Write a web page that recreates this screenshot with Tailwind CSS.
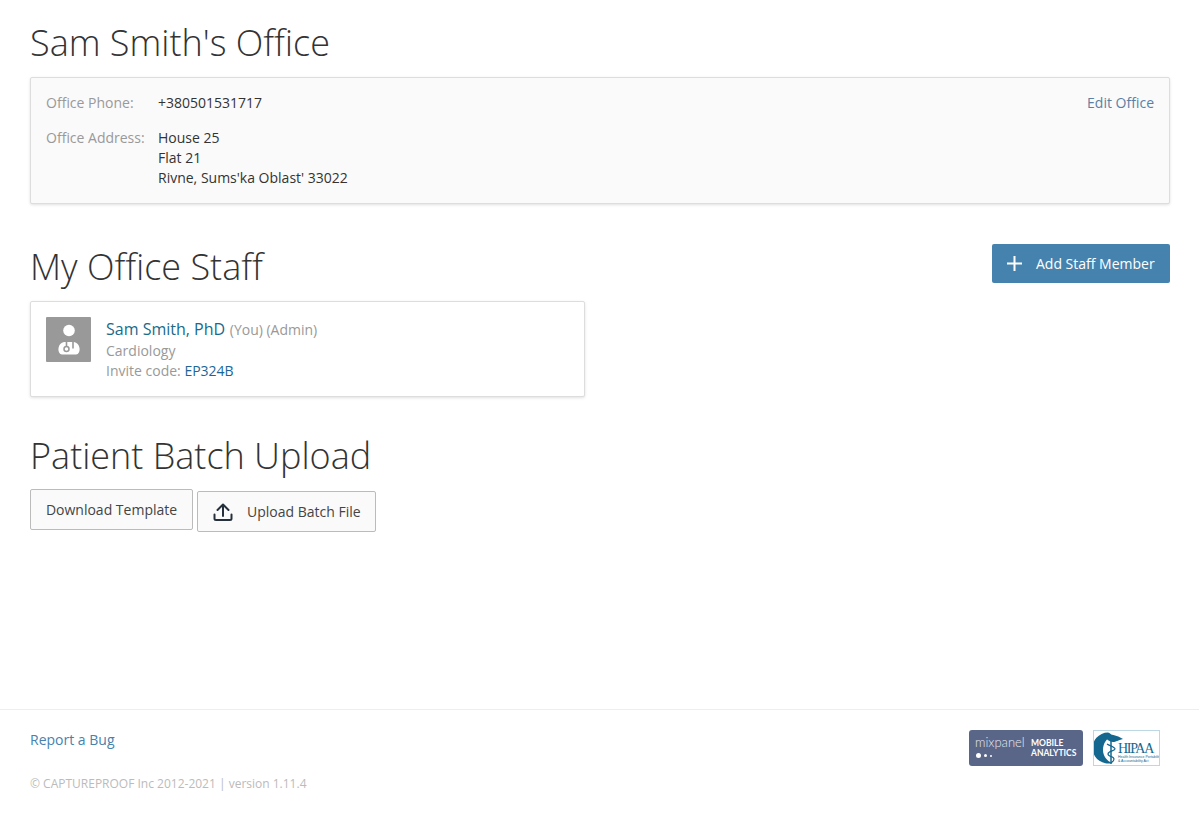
<!DOCTYPE html>
<html lang="en">
<head>
    <meta charset="UTF-8">
    <title>Sam Smith's Office</title>
    <script src="https://cdn.jsdelivr.net/npm/@tailwindcss/browser@4"></script>
</head>
<body class="bg-white font-['Open_Sans',sans-serif] text-[14px] leading-[20px] text-[#333] h-[821px] flex flex-col overflow-hidden">

    <main class="flex-1 pl-[30px] pr-[29px]">
        <h1 class="h-[77px] pt-[18px] text-[36px] leading-[50px] font-light text-[#333]">Sam Smith's Office</h1>

        <section class="h-[127px] border border-[#ddd] bg-[#fafafa] rounded-[2px] shadow-[0_1px_3px_rgba(0,0,0,0.12)] px-[15px] pt-[15px] flex justify-between">
            <div>
                <div class="flex">
                    <div class="w-[112px] text-[#999]">Office Phone:</div>
                    <div>+380501531717</div>
                </div>
                <div class="flex mt-[15px]">
                    <div class="w-[112px] text-[#999]">Office Address:</div>
                    <div>House 25<br>Flat 21<br>Rivne, Sums'ka Oblast' 33022</div>
                </div>
            </div>
            <a href="#" class="text-[#5b80a5]">Edit Office</a>
        </section>

        <div class="flex justify-between mt-[40px] h-[57px]">
            <h2 class="text-[36px] leading-[46px] font-light">My Office Staff</h2>
            <a href="#" class="h-[39px] w-[178px] bg-[#4682ae] rounded-[2px] text-white flex items-center pl-[14px]">
                <svg class="w-[17px] h-[17px] mr-[13px]" viewBox="0 0 17 17" fill="none" stroke="#fff" stroke-width="2"><path d="M8.500 1v15M1 8.500h15"/></svg>
                Add Staff Member
            </a>
        </div>

        <section class="w-[555px] h-[96px] border border-[#ddd] bg-white rounded-[2px] shadow-[0_1px_3px_rgba(0,0,0,0.12)] pl-[15px] pt-[15px] flex">
            <div class="w-[45px] h-[45px] bg-[#999] rounded-[1px]">
                <svg class="w-[45px] h-[45px]" viewBox="0 0 45 45">
                    <circle cx="23" cy="13.500" r="5.800" fill="#fff"/>
                    <path d="M18 25c-3 .5-5 3-5.500 6-.5 3.500 1 6.500 3.500 6.500h14c2.500 0 4-3 3.500-6.500-.5-3-2.500-5.500-5.500-6z" fill="#fff"/>
                    <path d="M20.500 24.500v5M27 24.500v7" stroke="#999" stroke-width="1.600" fill="none"/>
                    <circle cx="20.500" cy="32" r="2.500" fill="none" stroke="#999" stroke-width="1.500"/>
                </svg>
            </div>
            <div class="ml-[15px]">
                <div class="leading-[24px]"><a href="#" class="text-[16px] text-[#1a6a8a]">Sam Smith, PhD</a> <span class="text-[#999] ml-[1px]">(You) (Admin)</span></div>
                <div class="text-[#999] -mt-[1px]">Cardiology</div>
                <div class="text-[#999]">Invite code: <a href="#" class="text-[#1b6699]">EP324B</a></div>
            </div>
        </section>

        <h2 class="mt-[34px] text-[36px] leading-[50px] font-light">Patient Batch Upload</h2>

        <div class="flex items-start mt-[8px]">
            <button class="h-[41px] w-[163px] border border-[#bbb] bg-[#fafafa] rounded-[2px] text-[#444]">Download Template</button>
            <button class="h-[41px] w-[179px] ml-[4px] mt-[2px] border border-[#bbb] bg-[#fafafa] rounded-[2px] text-[#444] flex items-center pl-[15px]">
                <svg class="w-[20px] h-[20px] mr-[14px]" viewBox="0 0 20 20" fill="none" stroke="#26303c" stroke-width="2" stroke-linecap="round" stroke-linejoin="round"><path d="M10 14V2.500M4.500 8L10 2.500 15.500 8M1.500 12.500v4a1.500 1.500 0 0 0 1.500 1.500h14a1.500 1.500 0 0 0 1.500-1.500v-4"/></svg>
                Upload Batch File
            </button>
        </div>
    </main>

    <footer class="h-[112px] border-t border-[#eee] pl-[30px] pr-[29px] flex justify-between">
        <div>
            <a href="#" class="block mt-[20px] text-[#4682ae]">Report a Bug</a>
            <div class="mt-[24px] text-[12px] leading-[20px] text-[#bbb]">© CAPTUREPROOF Inc 2012-2021 | version 1.11.4</div>
        </div>
        <div class="flex items-start mt-[20px] mr-[10px]">
            <div class="w-[114px] h-[36px] bg-[#5a6688] rounded-[3px] flex text-white pl-[6px] pt-[6px] font-['Lato',sans-serif]">
                <div class="w-[56px]">
                    <div class="text-[13px] leading-[13px] font-light text-[#e6e8ee]">mixpanel</div>
                    <div class="flex items-center gap-[3px] mt-[4px] ml-[1px]">
                        <span class="w-[5px] h-[5px] rounded-full bg-white"></span>
                        <span class="w-[3px] h-[3px] rounded-full bg-white"></span>
                        <span class="w-[2px] h-[2px] rounded-full bg-white"></span>
                    </div>
                </div>
                <div class="text-[8.500px] leading-[10px] font-bold pt-[2px]">MOBILE<br>ANALYTICS</div>
            </div>
            <div class="relative w-[67px] h-[36px] ml-[10px] border border-[#bcd8e4] bg-white overflow-hidden">
                <svg class="absolute left-[0px] top-[0px] w-[36px] h-[34px]" viewBox="0 0 36 34">
                    <path d="M14 1.500A15.500 15.500 0 1 0 18 32c-5-2-9-7-9-13 0-7 4-12 9-14-1-2-2-3-4-3.500z" fill="#14688f"/>
                    <path d="M9 3c7 0 14 1 20 5-5 1-7 3-10 3-4 0-8-4-10-8z" fill="#14688f"/>
                    <path d="M17 7v26" stroke="#14688f" stroke-width="1.500"/>
                    <path d="M13 13c3 2 8 3 8 5s-7 2-7 5 6 2 6 5-3 3-3 4" stroke="#14688f" stroke-width="1.200" fill="none"/>
                </svg>
                <div class="absolute left-[24px] top-[11px] text-[14px] leading-[14px] tracking-[-1.300px] text-[#14688f] font-['Liberation_Serif',serif]">HIPAA</div>
                <div class="absolute left-[24px] top-[24px] text-[3.500px] leading-[4px] text-[#14688f] whitespace-nowrap font-['Liberation_Sans',sans-serif]">Health Insurance Portability<br>&amp; Accountability Act</div>
            </div>
        </div>
    </footer>

</body>
</html>
